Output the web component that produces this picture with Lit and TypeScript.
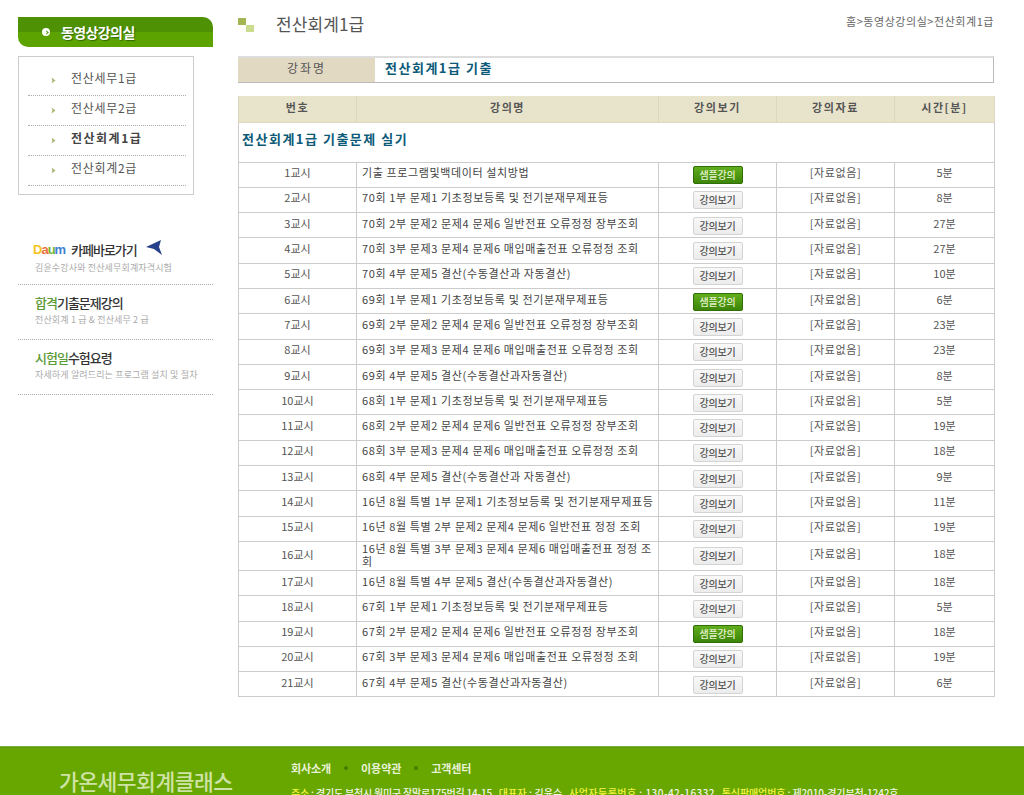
import { LitElement, html, css } from "lit";
import { customElement } from "lit/decorators.js";

const P1 = "문제1 기초정보등록 및 전기분재무제표등";
const P2 = "문제2 문제4 문제6 일반전표 오류정정 장부조회";
const P3 = "문제3 문제4 문제6 매입매출전표 오류정정 조회";
const rows: [string, string, boolean][] = [
  ["기출 프로그램및백데이터 설치방법", "5분", true],
  [`70회 1부 ${P1}`, "8분", false],
  [`70회 2부 ${P2}`, "27분", false],
  [`70회 3부 ${P3}`, "27분", false],
  ["70회 4부 문제5 결산(수동결산과 자동결산)", "10분", false],
  [`69회 1부 ${P1}`, "6분", true],
  [`69회 2부 ${P2}`, "23분", false],
  [`69회 3부 ${P3}`, "23분", false],
  ["69회 4부 문제5 결산(수동결산과자동결산)", "8분", false],
  [`68회 1부 ${P1}`, "5분", false],
  [`68회 2부 ${P2}`, "19분", false],
  [`68회 3부 ${P3}`, "18분", false],
  ["68회 4부 문제5 결산(수동결산과 자동결산)", "9분", false],
  [`16년 8월 특별 1부 ${P1}`, "11분", false],
  ["16년 8월 특별 2부 문제2 문제4 문제6 일반전표 정정 조회", "19분", false],
  ["16년 8월 특별 3부 문제3 문제4 문제6 매입매출전표 정정 조\n회", "18분", false],
  ["16년 8월 특별 4부 문제5 결산(수동결산과자동결산)", "18분", false],
  [`67회 1부 ${P1}`, "5분", false],
  [`67회 2부 ${P2}`, "18분", true],
  [`67회 3부 ${P3}`, "19분", false],
  ["67회 4부 문제5 결산(수동결산과자동결산)", "6분", false],
];

const chevron = html`<svg class="chev" width="5" height="7" viewBox="0 0 5 7"><path d="M0.5 0.5 L4.5 3.5 L0.5 6.5 L1.5 3.5 Z" fill="#a9b26e"/></svg>`;

@customElement("app-root")
export class AppRoot extends LitElement {
  static styles = css`
    :host {
      display: block; width: 1024px; height: 795px; overflow: hidden; background: #fff;
      font-family: "Noto Sans CJK KR", "Noto Sans", sans-serif; color: #444; font-size: 11px;
    }
    .page { display: flex; padding: 17px 30px 0 18px; height: 746px; box-sizing: border-box; }
    aside { width: 195px; flex: none; margin-right: 25px; }
    .side-head {
      height: 30px; box-sizing: border-box; display: flex; align-items: center; padding-left: 24px; gap: 11px;
      background: linear-gradient(#4f9105, #4f9105 50%, #5ca300 50%);
      border-radius: 0 10px 0 10px; color: #fff; font-size: 14px; font-weight: 700; letter-spacing: -0.6px;
      text-shadow: 1px 1px 1px #2f6a00;
    }
    .dot { width: 8px; height: 8px; border-radius: 50%; background: #fff; display: flex; align-items: center; justify-content: center; }
    .dot::after { content: ""; width: 2px; height: 2px; border-top: 1px solid #4f9105; border-right: 1px solid #4f9105; transform: rotate(45deg); }
    .nav { margin-top: 9px; width: 176px; height: 139px; box-sizing: border-box; border: 1px solid #ccc; padding: 9px 7px 0 9px; }
    .nav-item {
      height: 30px; box-sizing: border-box; border-bottom: 1px dotted #aaa; display: flex; align-items: center;
      padding: 0 0 6px 23px; font-size: 12px; color: #555; letter-spacing: 0.7px;
    }
    .nav-item.on { font-weight: 700; color: #444; letter-spacing: 1.5px; }
    .chev { margin-top: 6px; margin-right: 15px; flex: none; }
    .promos { margin-top: 45px; }
    .promo { height: 55px; box-sizing: border-box; border-bottom: 1px dotted #aaa; padding-left: 17px; }
    .promo.flat { padding-top: 9px; }
    .promo.flat .promo-sub { margin-top: 1px; }
    .promo-first { height: 45px; padding-top: 1px; }
    .promo-first .promo-sub { margin-top: 2px; }
    .promo-title { font-size: 13px; font-weight: 500; color: #333; letter-spacing: -1px; line-height: 18px; display: flex; align-items: center; }
    .promo-title b { font-weight: 500; color: #5c9a36; }
    .promo-sub { font-size: 9px; color: #aaa; line-height: 13px; margin-top: 3px; letter-spacing: 0.15px; }
    .daum { font-family: "Liberation Sans", sans-serif; font-size: 13px; font-weight: 700; letter-spacing: -1px; margin-right: 5px; width: 33px; margin-left: -2px; }
    .c1 { color: #f6c51d; } .c2 { color: #e9703a; } .c3 { color: #6fb52e; } .c4 { color: #3f7fd1; }
    .flag { margin-left: 9px; margin-top: -5px; }
    main { width: 756px; flex: none; }
    .title-bar { height: 39px; display: flex; align-items: flex-start; }
    .squares { width: 16px; height: 14px; margin-top: 1px; flex: none; margin-right: 22px; }
    .squares i { display: block; width: 8px; height: 7px; }
    .squares .a { background: #a3b654; }
    .squares .b { background: #cbdc8f; margin-left: 8px; }
    h1 { margin: 0; font-size: 17px; font-weight: 400; color: #555; line-height: 13px; flex: 1; letter-spacing: 0.1px; }
    .crumb { font-size: 11px; color: #666; line-height: 9px; letter-spacing: 0.55px; }
    .course { display: flex; height: 27px; box-sizing: border-box; border: 1px solid #bbb; border-top: 2px solid #ddd; border-left: 0; margin-bottom: 13px; }
    .course .lab { width: 137px; background: #e2d9c3; text-align: center; line-height: 20px; font-size: 12px; color: #555; letter-spacing: 2px; }
    .course .val { padding-left: 10px; color: #0c5a78; font-weight: 700; font-size: 13px; line-height: 20px; letter-spacing: 1.5px; }
    table { width: 756px; border-collapse: collapse; table-layout: fixed; }
    th { height: 26px; padding: 0 0 3px; background: #e8e3cb; font-size: 11px; font-weight: 700; color: #555; letter-spacing: 1.6px; border: 1px solid #dcd7bd; border-top: 0; box-sizing: border-box; }
    td { height: 25.3px; box-sizing: border-box; padding: 0 0 5px; border: 1px solid #ccc; text-align: center; font-size: 11px; color: #555; line-height: 14px; }
    td.name { text-align: left; padding-left: 5px; white-space: pre; letter-spacing: 0.62px; color: #444; }
    td.tall { height: 28px; padding-bottom: 2px; line-height: 13px; }
    td.btn { padding: 0; }
    td.sec { height: 40px; text-align: left; padding: 0 0 7px 3px; font-size: 13px; font-weight: 700; color: #0c5a78; letter-spacing: 1.5px; }
    td.doc { letter-spacing: 0.6px; }
    button {
      display: block; margin: 1px auto 0; width: 50px; height: 18px; padding: 0; box-sizing: border-box; border-radius: 2px;
      font: 500 10px/16px "Noto Sans CJK KR", sans-serif; letter-spacing: -0.2px; cursor: pointer;
      background: linear-gradient(#f8f8f8, #ececec); border: 1px solid #d4d4d4; color: #555;
    }
    button.green { background: linear-gradient(#62ad1e, #3c8508); border-color: #2f6f06; color: #e6f2d0; }
    footer { height: 66px; background: linear-gradient(#609c08 0, #67a600 2px, #68a800); display: flex; border-top: 1px solid #7dab3d; box-sizing: border-box; }
    .f-logo { width: 291px; box-sizing: border-box; padding: 21px 0 0 59px; font-size: 21.5px; font-weight: 500; color: #cfe3a6; letter-spacing: -0.5px; line-height: 26px; white-space: nowrap; }
    .f-links { margin-top: 14px; display: flex; align-items: center; font-size: 11px; font-weight: 700; color: #e9f2d8; line-height: 14px; letter-spacing: -0.1px; }
    .f-links i { width: 4px; height: 4px; border-radius: 50%; background: #3f7f00; margin: 0 13px; }
    .f-addr { margin-top: 11px; white-space: pre; font-size: 10px; font-weight: 500; color: #f2f7e6; line-height: 14px; }
    .f-addr em { font-style: normal; color: #f5f542; }
    .seg1 { letter-spacing: -0.2px; }
    .seg2 { letter-spacing: 0.1px; }
    .seg3 { letter-spacing: 0.45px; }
    .seg4 { letter-spacing: -0.12px; }
  `;

  render() {
    return html`
      <div class="page">
        <aside>
          <div class="side-head"><span class="dot"></span>동영상강의실</div>
          <div class="nav">
            <div class="nav-item">${chevron}전산세무1급</div>
            <div class="nav-item">${chevron}전산세무2급</div>
            <div class="nav-item on">${chevron}전산회계1급</div>
            <div class="nav-item">${chevron}전산회계2급</div>
          </div>
          <div class="promos">
            <div class="promo promo-first">
              <div class="promo-title"><span class="daum"><span class="c1">D</span><span class="c2">a</span><span class="c3">u</span><span class="c4">m</span></span>카페바로가기
                <svg class="flag" width="16" height="15" viewBox="0 0 16 15"><path d="M0 7 L15 0 L13 7 L16 15 L8 9 Z" fill="#27408b"/></svg></div>
              <div class="promo-sub">김윤수강사와 전산세무회계자격시험</div>
            </div>
            <div class="promo flat">
              <div class="promo-title"><span><b>합격</b>기출문제강의</span></div>
              <div class="promo-sub">전산회계 1 급 &amp; 전산세무 2 급</div>
            </div>
            <div class="promo flat">
              <div class="promo-title"><span><b>시험일</b>수험요령</span></div>
              <div class="promo-sub">자세하게 알려드리는 프로그램 설치 및 절차</div>
            </div>
          </div>
        </aside>
        <main>
          <div class="title-bar">
            <div class="squares"><i class="a"></i><i class="b"></i></div>
            <h1>전산회계1급</h1>
            <div class="crumb">홈&gt;동영상강의실&gt;전산회계1급</div>
          </div>
          <div class="course"><div class="lab">강좌명</div><div class="val">전산회계1급 기출</div></div>
          <table>
            <colgroup><col style="width:118px" /><col style="width:302px" /><col style="width:118px" /><col style="width:118px" /><col style="width:100px" /></colgroup>
            <tr><th>번호</th><th>강의명</th><th>강의보기</th><th>강의자료</th><th>시간[분]</th></tr>
            <tr><td class="sec" colspan="5">전산회계1급 기출문제 실기</td></tr>
            ${rows.map(([name, time, sample], i) => html`
              <tr>
                <td class=${name.includes("\n") ? "tall" : ""}>${i + 1}교시</td>
                <td class="name ${name.includes("\n") ? "tall" : ""}">${name}</td>
                <td class="btn"><button class=${sample ? "green" : ""}>${sample ? "샘플강의" : "강의보기"}</button></td>
                <td class="doc">[자료없음]</td>
                <td>${time}</td>
              </tr>`)}
          </table>
        </main>
      </div>
      <footer>
        <div class="f-logo">가온세무회계클래스</div>
        <div>
          <div class="f-links">회사소개<i></i>이용약관<i></i>고객센터</div>
          <div class="f-addr"><span class="seg1"><em>주소</em> : 경기도 부천시 원미구 장말로175번길 14-15</span>   <span class="seg2"><em>대표자</em> : 김윤수</span>   <span class="seg3"><em>사업자등록번호</em> : 130-42-16332</span>   <span class="seg4"><em>통신판매업번호</em> : 제2010-경기부천-1242호</span></div>
        </div>
      </footer>
    `;
  }
}
